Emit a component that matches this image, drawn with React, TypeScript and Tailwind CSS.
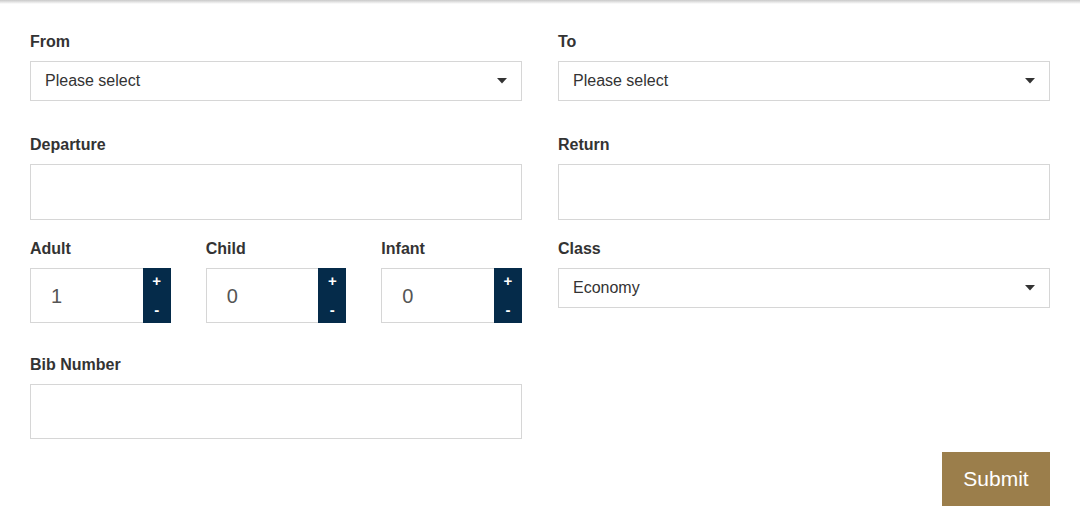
import React from "react";

const Caret = () => (
  <svg width="10" height="6" viewBox="0 0 10 6" className="shrink-0">
    <path d="M0 0 L10 0 L5 5.5 Z" fill="#333333" />
  </svg>
);

const Label = ({ children }: { children: React.ReactNode }) => (
  <div className="h-[20px] leading-[22px] text-[16px] font-bold text-[#333333] mb-[10px]">{children}</div>
);

const Select = ({ value }: { value: string }) => (
  <div className="h-[40px] border border-[#d6d6d6] bg-white flex items-center justify-between pl-[14px] pr-[14px]">
    <span className="text-[16px] text-[#333333]">{value}</span>
    <Caret />
  </div>
);

const TextBox = ({ h = "h-[55px]" }: { h?: string }) => <div className={`${h} border border-[#d6d6d6] bg-white`} />;

const Counter = ({ label, value }: { label: string; value: string }) => (
  <div>
    <Label>{label}</Label>
    <div className="flex h-[55px]">
      <div className="flex-1 border border-[#d6d6d6] border-r-0 bg-white flex items-center pl-[20px] text-[20px] text-[#555555]">
        {value}
      </div>
      <div className="w-[28px] bg-[#052b4a] flex flex-col items-center justify-between py-[4px] text-white font-bold text-[15px] leading-[18px]">
        <span>+</span>
        <span>-</span>
      </div>
    </div>
  </div>
);

export default function App() {
  return (
    <div className="w-[1080px] h-[514px] bg-white overflow-hidden" style={{ fontFamily: '"Liberation Sans", Arial, sans-serif' }}>
      <div className="h-[4px] bg-gradient-to-b from-[#c9c9c9] to-white" />
      <div className="px-[30px] pt-[27px]">
        <div className="grid grid-cols-2 gap-x-[36px]">
          <div>
            <Label>From</Label>
            <Select value="Please select" />
          </div>
          <div>
            <Label>To</Label>
            <Select value="Please select" />
          </div>
        </div>
        <div className="grid grid-cols-2 gap-x-[36px] mt-[33px]">
          <div>
            <Label>Departure</Label>
            <TextBox h="h-[56px]" />
          </div>
          <div>
            <Label>Return</Label>
            <TextBox h="h-[56px]" />
          </div>
        </div>
        <div className="grid grid-cols-2 gap-x-[36px] mt-[18px]">
          <div className="grid grid-cols-3 gap-x-[35px]">
            <Counter label="Adult" value="1" />
            <Counter label="Child" value="0" />
            <Counter label="Infant" value="0" />
          </div>
          <div>
            <Label>Class</Label>
            <Select value="Economy" />
          </div>
        </div>
        <div className="grid grid-cols-2 gap-x-[36px] mt-[31px]">
          <div>
            <Label>Bib Number</Label>
            <TextBox />
          </div>
          <div />
        </div>
        <div className="flex justify-end mt-[13px]">
          <button className="w-[108px] h-[54px] bg-[#9b7e4b] text-white text-[21px] leading-[50px]">Submit</button>
        </div>
      </div>
    </div>
  );
}
